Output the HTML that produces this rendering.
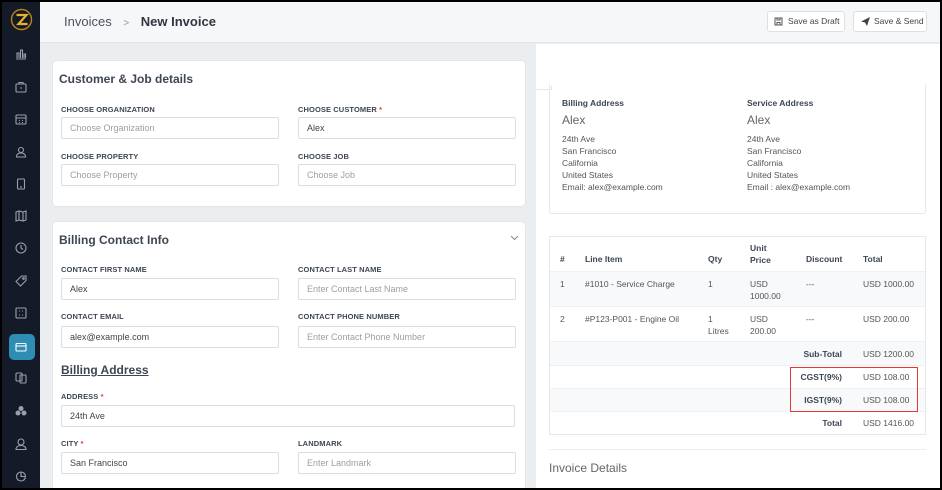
<!DOCTYPE html>
<html><head><meta charset="utf-8"><style>
*{box-sizing:border-box;margin:0;padding:0}
body{width:942px;height:490px;overflow:hidden;background:#000;font-family:"Liberation Sans",sans-serif;position:relative}
.a{position:absolute}
#frame{position:absolute;left:2px;top:2px;width:938px;height:486px;background:#ebeef1;overflow:hidden}
#side{position:absolute;left:0;top:0;width:38px;height:486px;background:#151a28}
.ic{position:absolute;left:12px;width:14px;height:14px}
#hdr{position:absolute;left:38px;top:0;width:900px;height:41px;background:#f6f7f8;border-bottom:1px solid #e3e6e9}
.card{position:absolute;background:#fff;border-radius:5px;border:1px solid #e4e7ea}
.t{position:absolute;color:#3d4652;font-weight:bold;font-size:12px}
.lb{position:absolute;font-size:7.5px;font-weight:bold;color:#3e4650;letter-spacing:.1px}
.lb b{color:#e53935}
.in{position:absolute;height:22px;border:1px solid #d9dee2;border-radius:2px;font-size:9px;color:#444;padding-left:8px;line-height:20px;background:#fff}
.ph{color:#9aa0a6}
.btn{position:absolute;top:9px;height:21px;background:#fff;border:1px solid #dde0e3;border-radius:3px;font-size:8.5px;color:#444;line-height:19px;padding-left:20px}
.rt{position:absolute;font-size:8.5px;color:#555;line-height:12px}
.row{position:absolute;left:0;width:375px}
</style></head><body>
<div id="frame">
<div id="side">
 <svg class="a" style="left:8px;top:6px" width="23" height="23" viewBox="0 0 23 23"><circle cx="11.5" cy="11.5" r="10" fill="none" stroke="#b8861a" stroke-width="1.4"/><path d="M6.5 7h10l-8 9h9" fill="none" stroke="#e6b32a" stroke-width="2.2"/></svg>
 <svg class="ic" style="top:45px" viewBox="0 0 14 14" fill="none" stroke="#9aa0ab" stroke-width="1.1"><path d="M2 12h10M3 11V6h2v5M6.5 11V3h2v8M10 11V7h1.5v4"/></svg>
 <svg class="ic" style="top:78px" viewBox="0 0 14 14" fill="none" stroke="#9aa0ab" stroke-width="1.1"><rect x="2" y="4" width="10" height="8" rx="1"/><path d="M5 4V2.5h4V4M6 8h2"/></svg>
 <svg class="ic" style="top:110px" viewBox="0 0 14 14" fill="none" stroke="#9aa0ab" stroke-width="1.1"><rect x="2" y="3" width="10" height="9" rx="1"/><path d="M2 6h10M5 8.5h1M8 8.5h1M5 10.5h1M8 10.5h1"/></svg>
 <svg class="ic" style="top:143px" viewBox="0 0 14 14" fill="none" stroke="#9aa0ab" stroke-width="1.1"><circle cx="7" cy="5" r="2.5"/><path d="M2.5 12c0-3 2-4 4.5-4s4.5 1 4.5 4z"/></svg>
 <svg class="ic" style="top:175px" viewBox="0 0 14 14" fill="none" stroke="#9aa0ab" stroke-width="1.1"><rect x="3.5" y="2" width="7" height="10" rx="1"/><path d="M6 10h2"/></svg>
 <svg class="ic" style="top:207px" viewBox="0 0 14 14" fill="none" stroke="#9aa0ab" stroke-width="1.1"><path d="M2 3l3-1 4 1 3-1v9l-3 1-4-1-3 1zM5 2v9M9 3v9"/></svg>
 <svg class="ic" style="top:239px" viewBox="0 0 14 14" fill="none" stroke="#9aa0ab" stroke-width="1.1"><circle cx="7" cy="7" r="5"/><path d="M7 4v3l2 1.5"/></svg>
 <svg class="ic" style="top:272px" viewBox="0 0 14 14" fill="none" stroke="#9aa0ab" stroke-width="1.1"><path d="M7.5 2H12v4.5L6.5 12 2 7.5z"/><circle cx="9.5" cy="4.5" r=".8"/></svg>
 <svg class="ic" style="top:304px" viewBox="0 0 14 14" fill="none" stroke="#9aa0ab" stroke-width="1.1"><rect x="2" y="2" width="10" height="10" rx="1"/><path d="M5 5h1M8 5h1M5 9h1M8 9h1"/></svg>
 <div class="a" style="left:7px;top:332px;width:26px;height:26px;background:#2e8db3;border-radius:5px"></div>
 <svg class="ic" style="top:338px" viewBox="0 0 14 14" fill="none" stroke="#fff" stroke-width="1.1"><rect x="2" y="3.5" width="10" height="7.5" rx="1"/><path d="M2 6h10"/></svg>
 <svg class="ic" style="top:369px" viewBox="0 0 14 14" fill="none" stroke="#9aa0ab" stroke-width="1.1"><rect x="2" y="2" width="6" height="8" rx="1"/><rect x="6" y="4" width="6" height="8" rx="1"/></svg>
 <svg class="ic" style="top:402px" viewBox="0 0 14 14" fill="#9aa0ab"><circle cx="7" cy="4.5" r="2.5"/><circle cx="4" cy="9" r="2.5"/><circle cx="10" cy="9" r="2.5"/></svg>
 <svg class="ic" style="top:435px" viewBox="0 0 14 14" fill="none" stroke="#9aa0ab" stroke-width="1.1"><circle cx="7" cy="5" r="3"/><path d="M2 12.5c0-2.5 2-4 5-4s5 1.5 5 4z"/></svg>
 <svg class="ic" style="top:467px" viewBox="0 0 14 14" fill="none" stroke="#9aa0ab" stroke-width="1.1"><circle cx="7" cy="7.5" r="4.5"/><path d="M7 3v4.5h4.5"/></svg>
</div>
<div id="hdr">
 <div class="a" style="left:24px;top:12px;font-size:13px;color:#4a5260">Invoices <span style="color:#999;font-size:10px;margin:0 8px">&gt;</span> <b style="color:#2f3640">New Invoice</b></div>
 <div class="btn" style="left:727px;width:78px"><svg class="a" style="left:6px;top:5px" width="9" height="9" viewBox="0 0 9 9" fill="none" stroke="#555"><rect x="1" y="1" width="7" height="7"/><path d="M3 1v2h3V1M3 8V5.5h3V8"/></svg>Save as Draft</div>
 <div class="btn" style="left:813px;width:74px"><svg class="a" style="left:7px;top:5px" width="9" height="9" viewBox="0 0 9 9" fill="#444"><path d="M0 4.5L9 0 6 9 4 5.5z"/></svg>Save &amp; Send</div>
</div>

<div class="card" style="left:50px;top:58px;width:474px;height:147px">
 <div class="t" style="left:6px;top:11px">Customer &amp; Job details</div>
</div>
<div class="lb" style="left:59px;top:103px">CHOOSE ORGANIZATION</div>
<div class="in ph" style="left:59px;top:115px;width:218px">Choose Organization</div>
<div class="lb" style="left:296px;top:103px">CHOOSE CUSTOMER <b>*</b></div>
<div class="in" style="left:296px;top:115px;width:218px">Alex</div>
<div class="lb" style="left:59px;top:150px">CHOOSE PROPERTY</div>
<div class="in ph" style="left:59px;top:162px;width:218px">Choose Property</div>
<div class="lb" style="left:296px;top:150px">CHOOSE JOB</div>
<div class="in ph" style="left:296px;top:162px;width:218px">Choose Job</div>

<div class="card" style="left:50px;top:219px;width:474px;height:280px">
 <div class="t" style="left:6px;top:11px">Billing Contact Info</div>
 <svg class="a" style="left:457px;top:13px" width="9" height="6" viewBox="0 0 9 6" fill="none" stroke="#888"><path d="M1 1l3.5 3.5L8 1"/></svg>
</div>
<div class="lb" style="left:59px;top:263px">CONTACT FIRST NAME</div>
<div class="in" style="left:59px;top:276px;width:218px">Alex</div>
<div class="lb" style="left:296px;top:263px">CONTACT LAST NAME</div>
<div class="in ph" style="left:296px;top:276px;width:218px">Enter Contact Last Name</div>
<div class="lb" style="left:59px;top:310px">CONTACT EMAIL</div>
<div class="in" style="left:59px;top:324px;width:218px">alex@example.com</div>
<div class="lb" style="left:296px;top:310px">CONTACT PHONE NUMBER</div>
<div class="in ph" style="left:296px;top:324px;width:218px">Enter Contact Phone Number</div>
<div class="t" style="left:59px;top:361px;text-decoration:underline">Billing Address</div>
<div class="lb" style="left:59px;top:390px">ADDRESS <b>*</b></div>
<div class="in" style="left:59px;top:403px;width:454px">24th Ave</div>
<div class="lb" style="left:59px;top:437px">CITY <b>*</b></div>
<div class="in" style="left:59px;top:450px;width:218px">San Francisco</div>
<div class="lb" style="left:296px;top:437px">LANDMARK</div>
<div class="in ph" style="left:296px;top:450px;width:218px">Enter Landmark</div>

<div class="a" style="left:534px;top:42px;width:404px;height:444px;background:#fff">
 <div class="a" style="left:0;top:42px;width:16px;height:4px;border-bottom:1px solid #e4e7ea;border-right:1px solid #e4e7ea"></div>
 <div class="a" style="left:13px;top:40px;width:377px;height:130px;border:1px solid #e6e9ec;border-top:none;border-radius:0 0 3px 3px">
  <div class="a" style="left:12px;top:14px;font-size:8.5px;font-weight:bold;color:#3d4652">Billing Address</div>
  <div class="a" style="left:12px;top:29px;font-size:12px;color:#666">Alex</div>
  <div class="rt" style="left:12px;top:49px">24th Ave<br>San Francisco<br>California<br>United States<br>Email: alex@example.com</div>
  <div class="a" style="left:197px;top:14px;font-size:8.5px;font-weight:bold;color:#3d4652">Service Address</div>
  <div class="a" style="left:197px;top:29px;font-size:12px;color:#666">Alex</div>
  <div class="rt" style="left:197px;top:49px">24th Ave<br>San Francisco<br>California<br>United States<br>Email : alex@example.com</div>
 </div>
 <div class="a" style="left:13px;top:192px;width:377px;height:199px;border:1px solid #e6e9ec;font-size:8.5px;color:#555">
  <div class="row" style="top:34px;height:35px;background:#f7f9fa;border-top:1px solid #eef0f2"></div>
  <div class="row" style="top:69px;height:35px;border-top:1px solid #eef0f2"></div>
  <div class="row" style="top:104px;height:24px;background:#f7f9fa;border-top:1px solid #eef0f2"></div>
  <div class="row" style="top:128px;height:23px;border-top:1px solid #eef0f2"></div>
  <div class="row" style="top:151px;height:23px;background:#f7f9fa;border-top:1px solid #eef0f2"></div>
  <div class="row" style="top:174px;height:24px;border-top:1px solid #eef0f2"></div>
  <div class="a" style="top:17px;left:10px;font-weight:bold;color:#3d4652">#</div>
  <div class="a" style="top:17px;left:35px;font-weight:bold;color:#3d4652">Line Item</div>
  <div class="a" style="top:17px;left:158px;font-weight:bold;color:#3d4652">Qty</div>
  <div class="a" style="top:5px;left:200px;font-weight:bold;color:#3d4652;line-height:12px">Unit<br>Price</div>
  <div class="a" style="top:17px;left:256px;font-weight:bold;color:#3d4652">Discount</div>
  <div class="a" style="top:17px;left:313px;font-weight:bold;color:#3d4652">Total</div>
  <div class="rt" style="top:41px;left:10px">1</div>
  <div class="rt" style="top:41px;left:35px">#1010 - Service Charge</div>
  <div class="rt" style="top:41px;left:158px">1</div>
  <div class="rt" style="top:41px;left:200px">USD<br>1000.00</div>
  <div class="rt" style="top:41px;left:256px">---</div>
  <div class="rt" style="top:41px;left:313px">USD 1000.00</div>
  <div class="rt" style="top:76px;left:10px">2</div>
  <div class="rt" style="top:76px;left:35px">#P123-P001 - Engine Oil</div>
  <div class="rt" style="top:76px;left:158px">1<br>Litres</div>
  <div class="rt" style="top:76px;left:200px">USD<br>200.00</div>
  <div class="rt" style="top:76px;left:256px">---</div>
  <div class="rt" style="top:76px;left:313px">USD 200.00</div>
  <div class="rt" style="top:111px;right:83px;font-weight:bold;color:#3d4652">Sub-Total</div>
  <div class="rt" style="top:111px;left:313px">USD 1200.00</div>
  <div class="rt" style="top:134px;right:83px;font-weight:bold;color:#3d4652">CGST(9%)</div>
  <div class="rt" style="top:134px;left:313px">USD 108.00</div>
  <div class="rt" style="top:157px;right:83px;font-weight:bold;color:#3d4652">IGST(9%)</div>
  <div class="rt" style="top:157px;left:313px">USD 108.00</div>
  <div class="rt" style="top:180px;right:83px;font-weight:bold;color:#3d4652">Total</div>
  <div class="rt" style="top:180px;left:313px">USD 1416.00</div>
  <div class="a" style="left:240px;top:130px;width:128px;height:45px;border:1px solid #e53935;z-index:5"></div>
 </div>
 <div class="a" style="left:13px;top:405px;width:377px;border-top:1px solid #eceef0"></div>
 <div class="a" style="left:13px;top:417px;font-size:12px;color:#666">Invoice Details</div>
</div>
</div>
</body></html>
